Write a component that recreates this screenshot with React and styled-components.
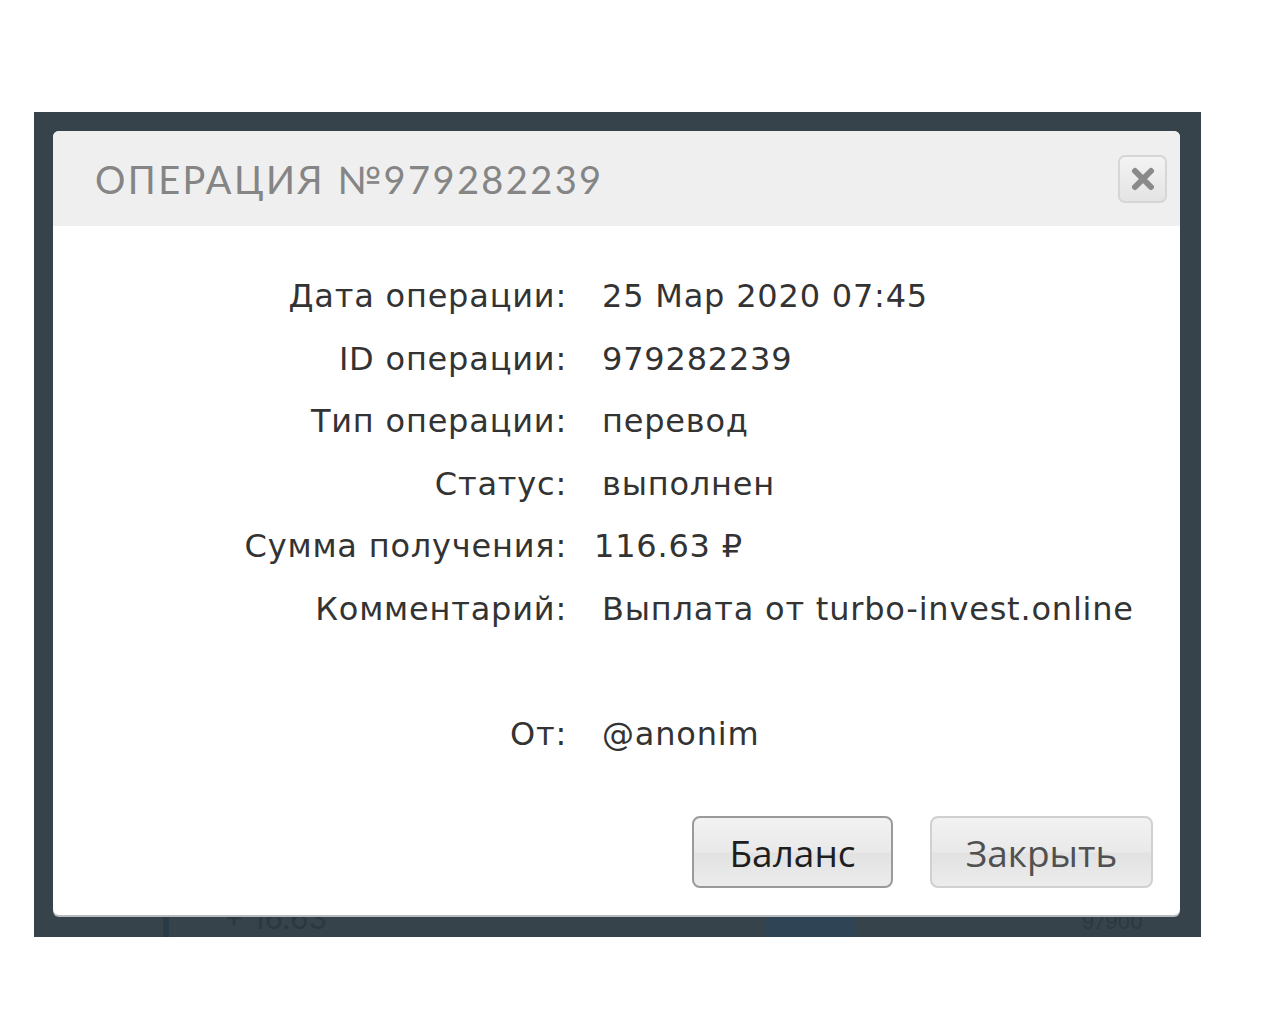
import styled, { createGlobalStyle } from "styled-components";

const GlobalStyle = createGlobalStyle`
  html, body {
    margin: 0;
    padding: 0;
    background: #ffffff;
  }
  body {
    font-family: "DejaVu Sans", "Inter", sans-serif;
  }
`;

const Page = styled.div`
  width: 1280px;
  height: 1024px;
  padding-top: 112px;
  padding-left: 34px;
  box-sizing: border-box;
`;

const Backdrop = styled.div`
  position: relative;
  width: 1167px;
  height: 825px;
  background: #36434b;
  padding: 19px 21px 0 19px;
  box-sizing: border-box;
  overflow: hidden;
`;

const Ghost = styled.div`
  position: absolute;
  color: #2c3840;
  font-size: ${({ $size }) => $size || 30}px;
  font-family: "Inter", sans-serif;
`;

const GhostBar = styled.div`
  position: absolute;
  left: 129px;
  bottom: 0;
  width: 6px;
  height: 24px;
  background: #2b3a47;
`;

const GhostCircle = styled.div`
  position: absolute;
  left: 731px;
  top: 773px;
  width: 90px;
  height: 90px;
  border-radius: 50%;
  background: #2f4555;
`;

const Modal = styled.div`
  position: relative;
  z-index: 1;
  width: 1127px;
  height: 784px;
  background: #ffffff;
  border-radius: 6px;
  box-shadow: 0 2px 0 #b9bcbe;
  display: flex;
  flex-direction: column;
  overflow: hidden;
`;

const Header = styled.div`
  height: 95px;
  flex-shrink: 0;
  background: #efefef;
  display: flex;
  align-items: center;
  justify-content: space-between;
  padding: 0 13px 0 42px;
`;

const Title = styled.h1`
  margin: 0;
  font-family: "Lato", "Noto Sans", sans-serif;
  font-weight: 400;
  font-size: 38px;
  letter-spacing: 2.4px;
  color: #858585;
`;

const CloseButton = styled.button`
  width: 49px;
  height: 48px;
  border: 2px solid #d6d6d6;
  border-radius: 7px;
  background: linear-gradient(#f3f3f3, #e4e4e4);
  display: flex;
  align-items: center;
  justify-content: center;
  padding: 0;
  cursor: pointer;
`;

const Body = styled.div`
  flex: 1;
  padding: 39px 27px 27px 0;
  display: flex;
  flex-direction: column;
`;

const Details = styled.div`
  display: grid;
  grid-template-columns: 514px auto;
  grid-auto-rows: 62.5px;
  column-gap: 35px;
  align-items: center;
  font-size: 32px;
  letter-spacing: 0.8px;
  color: #333333;
`;

const Label = styled.div`
  text-align: right;
  white-space: nowrap;
`;

const Value = styled.div`
  white-space: nowrap;
  margin-left: ${({ $shift }) => ($shift ? `-${$shift}px` : "0")};
`;

const Spacer = styled.div`
  grid-column: 1 / -1;
`;

const Actions = styled.div`
  margin-top: auto;
  display: flex;
  justify-content: flex-end;
  gap: 37px;
`;

const Button = styled.button`
  width: ${({ $w }) => $w}px;
  height: 72px;
  border-radius: 8px;
  border: 2px solid ${({ $primary }) => ($primary ? "#9a9a9a" : "#d0d0d0")};
  background: linear-gradient(#f2f2f2 0%, #e9e9e9 50%, #e2e2e2 52%, #ececec 100%);
  font-family: "Open Sans", "Noto Sans", sans-serif;
  font-size: 37px;
  color: ${({ $primary }) => ($primary ? "#1e1e1e" : "#505050")};
  cursor: pointer;
  padding: 0;
`;

const rows = [
  ["Дата операции:", "25 Мар 2020 07:45"],
  ["ID операции:", "979282239"],
  ["Тип операции:", "перевод"],
  ["Статус:", "выполнен"],
  ["Сумма получения:", "116.63 ₽", 8],
  ["Комментарий:", "Выплата от turbo-invest.online"],
];

const App = () => {
  return (
    <>
      <GlobalStyle />
      <Page>
        <Backdrop>
          <GhostBar />
          <Ghost style={{ left: 190, top: 788 }}>+ 16.63</Ghost>
          <GhostCircle />
          <Ghost $size={20} style={{ left: 1048, top: 798 }}>
            97900
          </Ghost>
          <Modal>
            <Header>
              <Title>ОПЕРАЦИЯ №979282239</Title>
              <CloseButton aria-label="close">
                <svg width="24" height="24" viewBox="0 0 24 24">
                  <path
                    d="M4 4 L20 20 M20 4 L4 20"
                    stroke="#8a8a8a"
                    strokeWidth="6"
                    strokeLinecap="round"
                  />
                </svg>
              </CloseButton>
            </Header>
            <Body>
              <Details>
                {rows.map(([label, value, shift]) => (
                  <>
                    <Label key={label}>{label}</Label>
                    <Value key={label + "v"} $shift={shift}>
                      {value}
                    </Value>
                  </>
                ))}
                <Spacer />
                <Label>От:</Label>
                <Value>@anonim</Value>
              </Details>
              <Actions>
                <Button $primary $w={201}>
                  Баланс
                </Button>
                <Button $w={223}>Закрыть</Button>
              </Actions>
            </Body>
          </Modal>
        </Backdrop>
      </Page>
    </>
  );
};

export default App;
